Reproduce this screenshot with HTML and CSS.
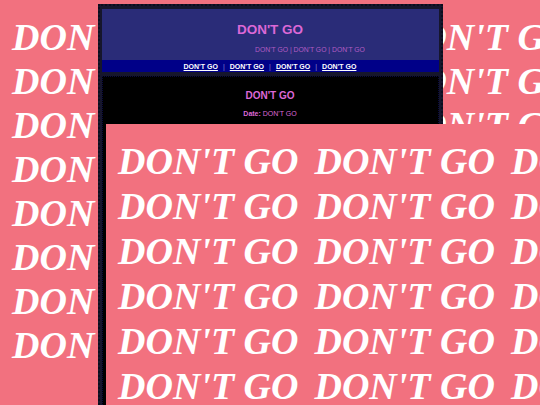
FILE: index.html
```html
<!DOCTYPE html>
<html lang="en">
<head>
<meta charset="utf-8">
<title>DON'T GO</title>
<link rel="stylesheet" href="styles.css">
</head>
<body>
<div class="pattern backdrop" aria-hidden="true">
  <div class="row">DON'T GO DON'T GO DON'T GO</div>
  <div class="row">DON'T GO DON'T GO DON'T GO</div>
  <div class="row">DON'T GO DON'T GO DON'T GO</div>
  <div class="row">DON'T GO DON'T GO DON'T GO</div>
  <div class="row">DON'T GO DON'T GO DON'T GO</div>
  <div class="row">DON'T GO DON'T GO DON'T GO</div>
  <div class="row">DON'T GO DON'T GO DON'T GO</div>
  <div class="row">DON'T GO DON'T GO DON'T GO</div>
</div>

<div class="page">
  <header class="header">
    <h1 class="title">DON'T GO</h1>
    <p class="tagline">DON'T GO | DON'T GO | DON'T GO</p>
  </header>
  <nav class="nav">
    <a href="#">DON'T GO</a><span class="sep">|</span>
    <a href="#">DON'T GO</a><span class="sep">|</span>
    <a href="#">DON'T GO</a><span class="sep">|</span>
    <a href="#">DON'T GO</a>
  </nav>
  <main class="content">
    <h2 class="post-title">DON'T GO</h2>
    <p class="date"><b>Date:</b> DON'T GO</p>
  </main>
</div>

<div class="pattern overlay">
  <div class="row wide"><span>DON'T GO</span><span>DON'T GO</span><span>DON'T GO</span></div>
  <div class="row wide"><span>DON'T GO</span><span>DON'T GO</span><span>DON'T GO</span></div>
  <div class="row wide"><span>DON'T GO</span><span>DON'T GO</span><span>DON'T GO</span></div>
  <div class="row wide"><span>DON'T GO</span><span>DON'T GO</span><span>DON'T GO</span></div>
  <div class="row wide"><span>DON'T GO</span><span>DON'T GO</span><span>DON'T GO</span></div>
  <div class="row wide"><span>DON'T GO</span><span>DON'T GO</span><span>DON'T GO</span></div>
</div>
</body>
</html>
```

FILE: styles.css
```css
html, body {
  margin: 0;
  height: 405px;
  overflow: hidden;
}

body {
  position: relative;
  background: #f2717f;
  font-family: "Liberation Sans", Arial, sans-serif;
}

/* repeated slogan pattern */
.pattern {
  box-sizing: border-box;
  overflow: hidden;
  background: #f2717f;
  color: #ffffff;
  font-family: "Liberation Serif", "Times New Roman", serif;
  font-weight: bold;
  font-style: italic;
  font-size: 38px;
  white-space: nowrap;
}

.row.wide {
  display: flex;
  gap: 16px;
}

.backdrop {
  position: absolute;
  inset: 0;
  z-index: 0;
  padding: 15px 0 0 12px;
  line-height: 44px;
}

.overlay {
  position: absolute;
  left: 106px;
  top: 124px;
  width: 520px;
  height: 300px;
  z-index: 2;
  padding: 15px 0 0 12px;
  line-height: 45px;
}

/* main column */
.page {
  position: relative;
  z-index: 1;
  box-sizing: border-box;
  width: 345px;
  height: 420px;
  margin: 4px auto 0;
  padding: 3px 2px;
  border: 2px dotted #0c0c1c;
  background: #16162c;
  display: flex;
  flex-direction: column;
}

.header {
  height: 51px;
  box-sizing: border-box;
  background: #2a2c78;
  padding-top: 13px;
  text-align: center;
}

.title {
  margin: 0;
  font-size: 13.5px;
  line-height: 16px;
  font-weight: bold;
  color: #dc68d6;
}

.tagline {
  margin: 7px 0 0 80px;
  font-size: 6.8px;
  line-height: 9px;
  color: #b35cc4;
}

.nav {
  height: 12px;
  background: #000088;
  display: flex;
  justify-content: center;
  align-items: center;
  gap: 5px;
  font-size: 7px;
  font-weight: bold;
}

.nav a {
  color: #ffffff;
  text-decoration: underline;
}

.sep {
  color: #8c8cd0;
  font-weight: normal;
}

.content {
  margin-top: 4px;
  flex: 1;
  background: #000000;
  border: 1px dotted #0a0a40;
  text-align: center;
  padding-top: 13px;
}

.post-title {
  margin: 0;
  font-size: 10px;
  line-height: 12px;
  font-weight: bold;
  color: #dc68d6;
}

.date {
  margin: 7px 0 0;
  font-size: 7px;
  line-height: 9px;
  color: #dc68d6;
}

.date b {
  font-weight: bold;
}
```
